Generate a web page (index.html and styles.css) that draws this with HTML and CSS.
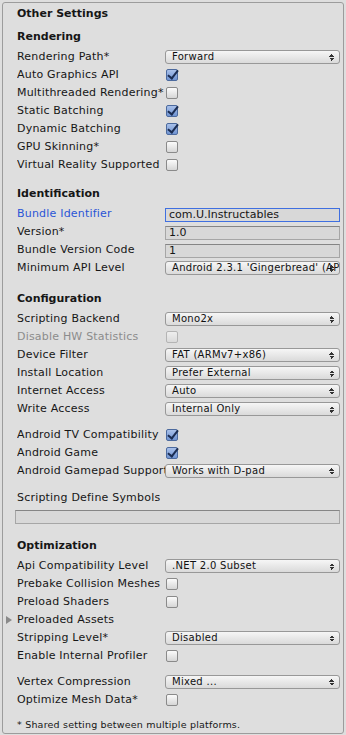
FILE: index.html
```html
<!DOCTYPE html>
<html lang="en">
<head>
    <meta charset="UTF-8">
    <meta name="viewport" content="width=device-width, initial-scale=1.0">
    <title>Other Settings</title>
    <link rel="stylesheet" href="styles.css">
</head>
<body>
    <div class="panel">
        <div class="title">Other Settings</div>

        <!-- Rendering -->
        <div class="section-head first">Rendering</div>
        <div class="row">
            <span class="label">Rendering Path*</span>
            <div class="popup">Forward<span class="arrows"></span></div>
        </div>
        <div class="row">
            <span class="label">Auto Graphics API</span>
            <span class="check on"></span>
        </div>
        <div class="row">
            <span class="label">Multithreaded Rendering*</span>
            <span class="check"></span>
        </div>
        <div class="row">
            <span class="label">Static Batching</span>
            <span class="check on"></span>
        </div>
        <div class="row">
            <span class="label">Dynamic Batching</span>
            <span class="check on"></span>
        </div>
        <div class="row">
            <span class="label">GPU Skinning*</span>
            <span class="check"></span>
        </div>
        <div class="row">
            <span class="label">Virtual Reality Supported</span>
            <span class="check"></span>
        </div>

        <!-- Identification -->
        <div class="section-head">Identification</div>
        <div class="row">
            <span class="label active">Bundle Identifier</span>
            <div class="field focused">com.U.Instructables</div>
        </div>
        <div class="row">
            <span class="label">Version*</span>
            <div class="field">1.0</div>
        </div>
        <div class="row">
            <span class="label">Bundle Version Code</span>
            <div class="field">1</div>
        </div>
        <div class="row">
            <span class="label">Minimum API Level</span>
            <div class="popup">Android 2.3.1 'Gingerbread' (API level 9)<span class="arrows"></span></div>
        </div>

        <!-- Configuration -->
        <div class="section-head config">Configuration</div>
        <div class="row">
            <span class="label">Scripting Backend</span>
            <div class="popup">Mono2x<span class="arrows"></span></div>
        </div>
        <div class="row">
            <span class="label disabled">Disable HW Statistics</span>
            <span class="check off"></span>
        </div>
        <div class="row">
            <span class="label">Device Filter</span>
            <div class="popup">FAT (ARMv7+x86)<span class="arrows"></span></div>
        </div>
        <div class="row">
            <span class="label">Install Location</span>
            <div class="popup">Prefer External<span class="arrows"></span></div>
        </div>
        <div class="row">
            <span class="label">Internet Access</span>
            <div class="popup">Auto<span class="arrows"></span></div>
        </div>
        <div class="row">
            <span class="label">Write Access</span>
            <div class="popup">Internal Only<span class="arrows"></span></div>
        </div>

        <div class="spacer"></div>
        <div class="row">
            <span class="label">Android TV Compatibility</span>
            <span class="check on"></span>
        </div>
        <div class="row">
            <span class="label">Android Game</span>
            <span class="check on"></span>
        </div>
        <div class="row">
            <span class="label">Android Gamepad Support Level</span>
            <div class="popup">Works with D-pad<span class="arrows"></span></div>
        </div>

        <div class="spacer tall"></div>
        <div class="row">
            <span class="label wide">Scripting Define Symbols</span>
        </div>
        <div class="row">
            <div class="field full"></div>
        </div>

        <!-- Optimization -->
        <div class="section-head optim">Optimization</div>
        <div class="row">
            <span class="label">Api Compatibility Level</span>
            <div class="popup">.NET 2.0 Subset<span class="arrows"></span></div>
        </div>
        <div class="row">
            <span class="label">Prebake Collision Meshes</span>
            <span class="check"></span>
        </div>
        <div class="row">
            <span class="label">Preload Shaders</span>
            <span class="check"></span>
        </div>
        <div class="row">
            <span class="foldout"></span>
            <span class="label">Preloaded Assets</span>
        </div>
        <div class="row">
            <span class="label">Stripping Level*</span>
            <div class="popup">Disabled<span class="arrows"></span></div>
        </div>
        <div class="row">
            <span class="label">Enable Internal Profiler</span>
            <span class="check"></span>
        </div>

        <div class="spacer"></div>
        <div class="row">
            <span class="label">Vertex Compression</span>
            <div class="popup">Mixed ...<span class="arrows"></span></div>
        </div>
        <div class="row">
            <span class="label">Optimize Mesh Data*</span>
            <span class="check"></span>
        </div>

        <div class="spacer"></div>
        <div class="note">* Shared setting between multiple platforms.</div>
    </div>
</body>
</html>
```

FILE: styles.css
```css
* {
    box-sizing: border-box;
}

body {
    margin: 0;
    padding: 2px;
    background-color: #dedede;
    font-family: "DejaVu Sans", Verdana, sans-serif;
    font-size: 11px;
    color: #161616;
    overflow: hidden;
}

.panel {
    width: 342px;
    border: 1px solid #9c9c9c;
    border-radius: 3px;
    padding: 2px 3px 0 14px;
    background-color: #dedede;
}

.title, .section-head {
    height: 18px;
    line-height: 18px;
    font-weight: bold;
}

.section-head {
    margin-top: 11px;
    margin-bottom: 2px;
}

.section-head.first {
    margin-top: 5px;
}

.section-head.config {
    margin-top: 13px;
}

.section-head.optim {
    margin-top: 12px;
}

.spacer {
    height: 8px;
}

.spacer.tall {
    height: 9px;
}

.row {
    display: flex;
    align-items: center;
    height: 18px;
}

.label {
    flex: none;
    width: 148px;
    white-space: nowrap;
    overflow: hidden;
    line-height: 18px;
    letter-spacing: 0.2px;
}

.label.wide {
    width: auto;
}

.label.active {
    color: #2a55d6;
}

.label.disabled {
    color: #8c8c8c;
}

.foldout {
    flex: none;
    width: 0;
    height: 0;
    margin-left: -11px;
    margin-right: 5px;
    border-top: 4px solid transparent;
    border-bottom: 4px solid transparent;
    border-left: 6px solid #8a8a8a;
}

/* popup / dropdown */
.popup {
    flex: 1;
    position: relative;
    height: 14px;
    line-height: 12px;
    padding: 0 18px 0 6px;
    font-size: 10px;
    letter-spacing: 0.3px;
    color: #111;
    white-space: nowrap;
    overflow: hidden;
    border: 1px solid #989898;
    border-radius: 3px;
    background: linear-gradient(#f6f6f6, #dadada);
}

.popup .arrows {
    position: absolute;
    right: 5px;
    top: 3px;
    width: 5px;
    height: 7px;
    background:
        linear-gradient(to bottom right, transparent 50%, #333 50%) left top / 3px 3px no-repeat,
        linear-gradient(to bottom left, transparent 50%, #333 50%) right top / 2px 3px no-repeat,
        linear-gradient(to top right, transparent 50%, #333 50%) left bottom / 3px 3px no-repeat,
        linear-gradient(to top left, transparent 50%, #333 50%) right bottom / 2px 3px no-repeat;
}

/* text field */
.field {
    flex: 1;
    height: 14px;
    line-height: 12px;
    padding: 0 3px;
    margin-top: 1px;
    border: 1px solid #a6a6a6;
    border-top-color: #858585;
    background-color: #d8d8d8;
    white-space: nowrap;
    overflow: hidden;
}

.field.focused {
    border-color: #3f6fe0;
}

.field.full {
    margin-left: -2px;
}

/* checkbox */
.check {
    flex: none;
    position: relative;
    width: 12px;
    height: 12px;
    margin-left: 1px;
    border: 1px solid #8a8a8a;
    border-radius: 2px;
    background: linear-gradient(#fbfbfb, #d6d6d6);
}

.check.on {
    border-color: #4c6a9e;
    background: linear-gradient(#a9c1ea, #7094d2);
}

.check.on::after {
    content: "";
    position: absolute;
    left: 3px;
    top: -2px;
    width: 4px;
    height: 9px;
    border-right: 2px solid #1b2d52;
    border-bottom: 2px solid #1b2d52;
    transform: rotate(38deg);
}

.check.off {
    border-color: #b4b4b4;
    background: linear-gradient(#eeeeee, #dadada);
}

.note {
    height: 16px;
    line-height: 16px;
    font-size: 9.5px;
    letter-spacing: 0.2px;
}
```
